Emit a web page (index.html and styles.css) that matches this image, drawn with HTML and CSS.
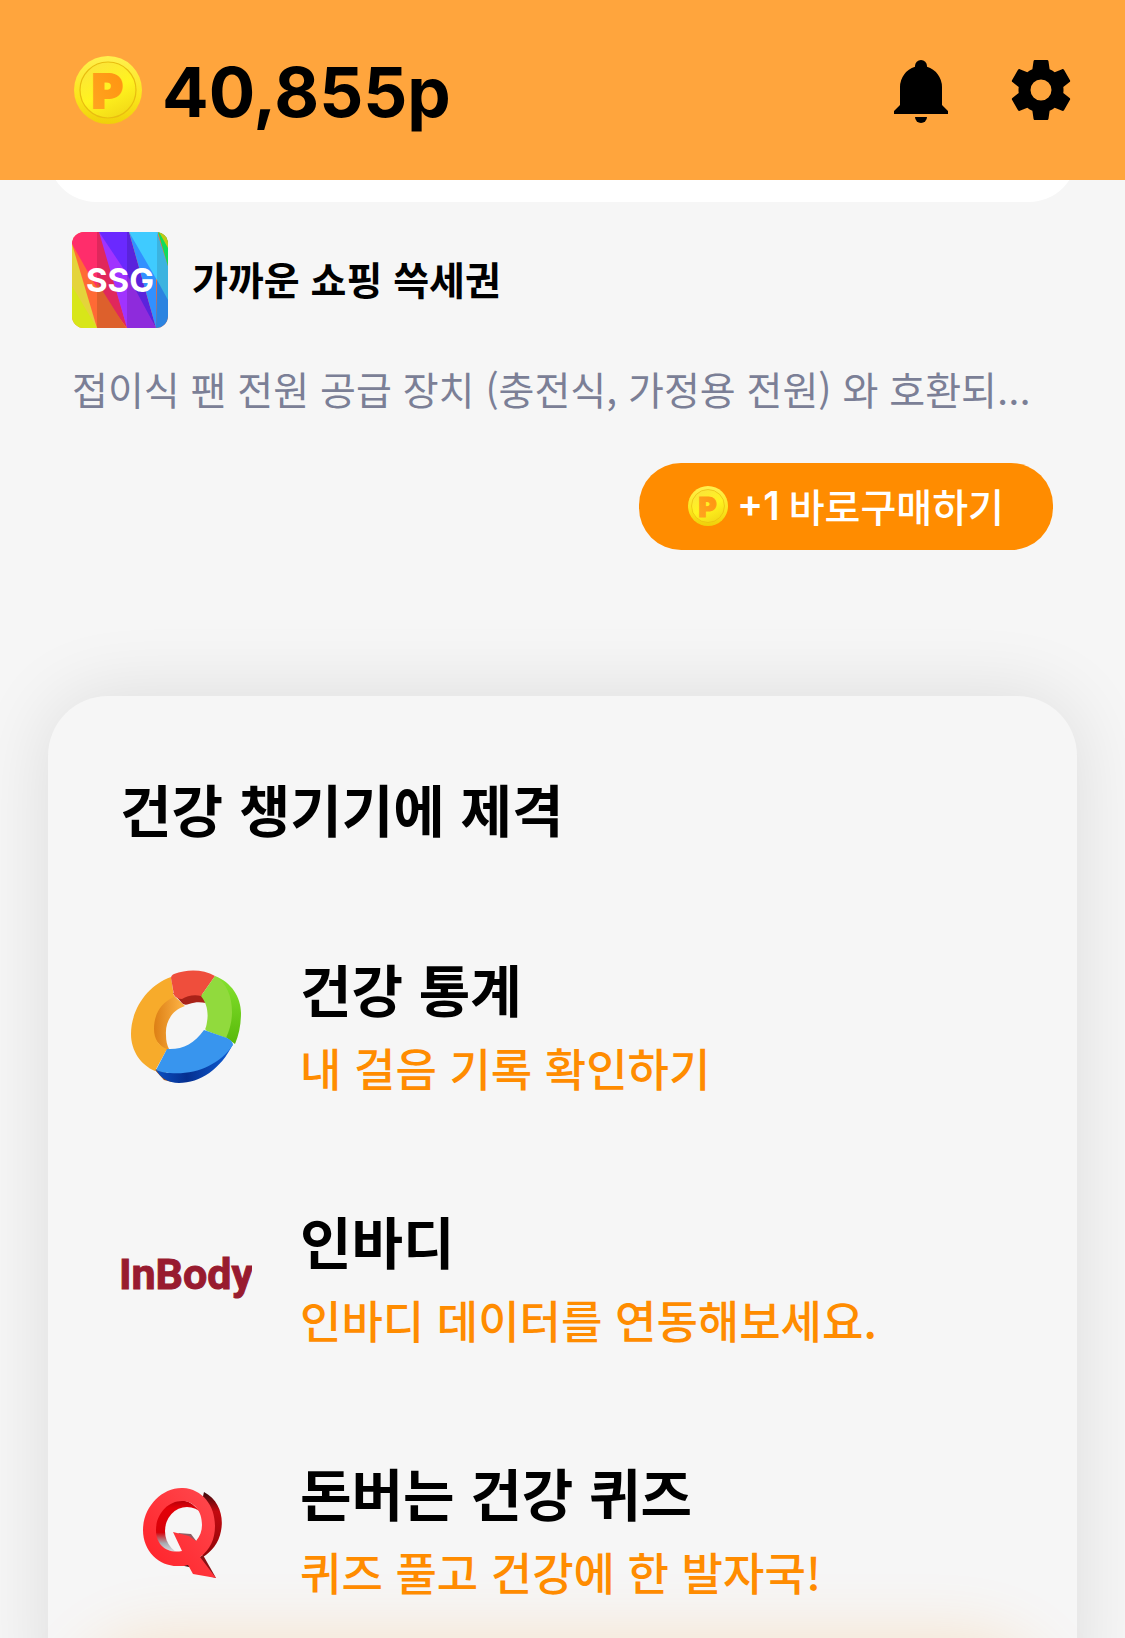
FILE: index.html
```html
<!DOCTYPE html>
<html lang="ko">
<head>
    <meta charset="UTF-8">
    <meta name="viewport" content="width=device-width, initial-scale=1.0">
    <title>건강 챙기기에 제격</title>
    <link rel="stylesheet" href="styles.css">
</head>
<body>

<!-- shared coin icon -->
<svg class="defs" width="0" height="0" aria-hidden="true">
    <defs>
        <linearGradient id="coin-edge" x1="0" y1="0" x2="0" y2="1">
            <stop offset="0" stop-color="#fff04e"/>
            <stop offset="0.6" stop-color="#fbe51c"/>
            <stop offset="1" stop-color="#efd00a"/>
        </linearGradient>
        <linearGradient id="coin-face" x1="0.2" y1="0" x2="0.7" y2="1">
            <stop offset="0" stop-color="#fbe33c"/>
            <stop offset="0.55" stop-color="#fff41f"/>
            <stop offset="1" stop-color="#f2d916"/>
        </linearGradient>
        <linearGradient id="coin-letter" x1="0" y1="1" x2="1" y2="0">
            <stop offset="0" stop-color="#ffa621"/>
            <stop offset="1" stop-color="#ff920f"/>
        </linearGradient>
        <symbol id="coin" viewBox="0 0 68 68">
            <circle cx="34" cy="34" r="34" fill="url(#coin-edge)"/>
            <circle cx="34" cy="34" r="28" fill="url(#coin-face)" stroke="#e9bd10" stroke-width="1.2"/>
            <text x="18" y="52" class="coin-letter" fill="url(#coin-letter)" stroke="url(#coin-letter)">P</text>
        </symbol>
    </defs>
</svg>

<header class="topbar">
    <div class="points">
        <svg class="points-coin"><use href="#coin"/></svg>
        <span>40,855p</span>
    </div>
    <div class="actions">
        <button type="button" class="icon-btn" aria-label="알림">
            <svg viewBox="0 0 72 72">
                <path d="M30 12a6 6 0 0 1 12 0v.8A21 21 0 0 1 57 33v18l6 6v3H9v-3l6-6V33a21 21 0 0 1 15-20.200z"/>
                <path d="M30 63h12a6 6 0 0 1-12 0z"/>
            </svg>
        </button>
        <button type="button" class="icon-btn" aria-label="설정">
            <svg viewBox="0 0 24 24">
                <path d="M19.430 12.980c.040-.320.070-.640.070-.980s-.030-.660-.070-.980l2.110-1.650c.190-.150.240-.420.120-.640l-2-3.460c-.120-.220-.390-.300-.610-.220l-2.490 1c-.520-.400-1.080-.730-1.690-.980l-.380-2.650A.488.488 0 0 0 14 2h-4c-.250 0-.460.180-.490.420l-.380 2.650c-.610.250-1.170.590-1.690.980l-2.490-1c-.230-.090-.490 0-.610.220l-2 3.460c-.130.220-.070.490.120.640l2.110 1.650c-.040.320-.070.650-.070.980s.030.660.070.980l-2.110 1.650c-.190.150-.240.420-.120.640l2 3.460c.120.220.390.300.610.220l2.490-1c.520.400 1.080.730 1.690.980l.380 2.650c.030.240.240.420.490.420h4c.250 0 .460-.180.490-.420l.380-2.650c.610-.250 1.170-.590 1.690-.980l2.490 1c.230.090.490 0 .610-.220l2-3.460c.120-.220.070-.490-.120-.640l-2.110-1.650zM12 15.500a3.500 3.500 0 1 1 0-7 3.500 3.500 0 0 1 0 7z"/>
            </svg>
        </button>
    </div>
</header>

<main>
    <div class="prev-card"></div>

    <section class="ad">
        <div class="ad-head">
            <svg class="ad-logo" viewBox="0 0 96 96" role="img" aria-label="SSG">
                <rect width="96" height="96" fill="#ff6a35"/>
                <path d="M0 0h28L25 0v56L0 12z" fill="#ff2d6b"/>
                <path d="M25 0h3l27 96L25 56z" fill="#e0275c"/>
                <path d="M0 12l25 84H0z" fill="#e4d43b"/>
                <path d="M0 54l25 42H0z" fill="#d8e619"/>
                <path d="M25 50l29 46H25z" fill="#dd602c"/>
                <path d="M27 0l28 96V34z" fill="#a033ff"/>
                <path d="M27 0h30l-2 42z" fill="#6a29ff"/>
                <path d="M55 0h2l27 96-29-48z" fill="#5a23dc"/>
                <path d="M55 42l29 54H55z" fill="#8e2bdc"/>
                <path d="M57 0l27 96V40z" fill="#3290ff"/>
                <path d="M57 0h29v50z" fill="#3fcbff"/>
                <path d="M85 0l11 34v36L85 50z" fill="#3bb3e0"/>
                <path d="M85 48l11 20v28H84z" fill="#2b83e0"/>
                <path d="M86 0h10v34z" fill="#0ddc5c"/>
                <path d="M87 0h9v16z" fill="#c3c814"/>
                <text x="48" y="60" class="ssg-text">SSG</text>
            </svg>
            <h3>가까운 쇼핑 쓱세권</h3>
        </div>
        <p class="ad-desc">접이식 팬 전원 공급 장치 (충전식, 가정용 전원) 와 호환되<span class="dots">…</span></p>
        <button type="button" class="buy-btn">
            <svg class="buy-coin"><use href="#coin"/></svg>
            <span class="plus">+1</span>
            <span class="buy-label">바로구매하기</span>
        </button>
    </section>

    <section class="card">
        <h2>건강 챙기기에 제격</h2>
        <ul class="menu">
            <li>
                <a href="#">
                    <svg class="menu-icon" viewBox="0 0 132 132" aria-hidden="true">
                        <defs>
                            <linearGradient id="d-yellow" x1="0" y1="0" x2="1" y2="0">
                                <stop offset="0" stop-color="#d97a10"/>
                                <stop offset="1" stop-color="#ffb648"/>
                            </linearGradient>
                            <linearGradient id="d-blue" x1="0" y1="0" x2="1" y2="0">
                                <stop offset="0" stop-color="#0b4fc0"/>
                                <stop offset="0.400" stop-color="#052f90"/>
                                <stop offset="1" stop-color="#0f5fd6"/>
                            </linearGradient>
                            <linearGradient id="d-green" x1="0" y1="0" x2="0" y2="1">
                                <stop offset="0" stop-color="#86e32f"/>
                                <stop offset="1" stop-color="#58b90a"/>
                            </linearGradient>
                        </defs>
                        <path d="M34 109l10 11 8 2-8-13z" fill="#a9500f"/>
                        <path d="M51 33l14 13C52 50 45 62 46 75c0 6 1 10 3 14l-4 2-14-16c0-18 6-30 20-42z" fill="url(#d-yellow)"/>
                        <path d="M51 17C28 25 11 49 11 74c0 17 10 31 24 37l12-22c-8-3-13-10-13-20 0-15 7-26 20-32z" fill="#f7ab2b"/>
                        <path d="M53 33l9 10c2 2 4 2 7 1 6-2 11-2 17-1l-5-10z" fill="#a92218"/>
                        <path d="M51 18c0-2 1-3 3-4 13-5 29-5 41 2L81 36c-7-2-14 0-19 3-4 0-7-2-8-4z" fill="#ef4e3c"/>
                        <path d="M95 16c16 6 26 21 26 37 0 11-2 22-6 31l-11-8 6-35z" fill="url(#d-green)"/>
                        <path d="M95 16c12 7 17 21 17 36 0 9-2 17-6 26l-19-7c-2-1-2-2-1-4 3-12 2-22-5-31z" fill="#91da3d"/>
                        <path d="M36 110l12 3 53-17 12-12c-12 25-33 39-54 39-11 0-18-5-23-13z" fill="url(#d-blue)"/>
                        <path d="M84 70l23 8c4 2 6 4 6 7-14 20-37 30-63 28-5 0-9-1-14-3l11-21c15 1 27-5 37-19z" fill="#3895ee"/>
                    </svg>
                    <div class="menu-text">
                        <strong>건강 통계</strong>
                        <span>내 걸음 기록 확인하기</span>
                    </div>
                </a>
            </li>
            <li>
                <a href="#">
                    <svg class="menu-icon" viewBox="0 0 132 132" role="img" aria-label="InBody">
                        <text x="66" y="77" class="inbody-text">InBody</text>
                    </svg>
                    <div class="menu-text">
                        <strong>인바디</strong>
                        <span>인바디 데이터를 연동해보세요.</span>
                    </div>
                </a>
            </li>
            <li>
                <a href="#">
                    <svg class="menu-icon" viewBox="0 0 132 132" aria-hidden="true">
                        <defs>
                            <linearGradient id="q-face" x1="0" y1="1" x2="1" y2="0">
                                <stop offset="0" stop-color="#ff1f27"/>
                                <stop offset="1" stop-color="#ff4a4f"/>
                            </linearGradient>
                            <linearGradient id="q-side" x1="0" y1="0" x2="0" y2="1">
                                <stop offset="0" stop-color="#3a0a0c"/>
                                <stop offset="0.300" stop-color="#c30a10"/>
                                <stop offset="1" stop-color="#8f0508"/>
                            </linearGradient>
                            <linearGradient id="q-inner" x1="0" y1="0" x2="0" y2="1">
                                <stop offset="0" stop-color="#b00008"/>
                                <stop offset="0.150" stop-color="#e30008"/>
                                <stop offset="0.600" stop-color="#d80008"/>
                                <stop offset="0.800" stop-color="#a9a9b0"/>
                                <stop offset="1" stop-color="#e8e8ec"/>
                            </linearGradient>
                        </defs>
                        <path d="M84 28c15 8 20 24 17 39-2 12-10 21-18 26l-7-30z" fill="url(#q-side)"/>
                        <path d="M55 100l14 3 3-5z" fill="#3c1012"/>
                        <path d="M78 94l5-3 13 23-7-2z" fill="#8a1014"/>
                        <ellipse cx="59" cy="63" rx="25" ry="27" fill="url(#q-inner)"/>
                        <ellipse cx="67" cy="67" rx="22" ry="24" class="q-hole"/>
                        <path d="M58 69l13 1 6 8-6 4z" fill="#8e5b62"/>
                        <path fill-rule="evenodd" d="M63 24C42 23 23 43 23 66c0 22 17 37 36 36 4 0 6 0 9-1l5 9 23 4-16-21c10-7 15-18 15-31 0-21-13-37-32-38zM62 37c12 0 20 10 20 24 0 6-2 11-6 16l-7-5-16-4 9 19c-15 3-26-6-26-21 0-16 12-29 26-29z" fill="url(#q-face)"/>
                    </svg>
                    <div class="menu-text">
                        <strong>돈버는 건강 퀴즈</strong>
                        <span>퀴즈 풀고 건강에 한 발자국!</span>
                    </div>
                </a>
            </li>
        </ul>
    </section>
</main>

<!-- glow of the bottom banner -->
<div class="bottom-banner"></div>

</body>
</html>
```
FILE: styles.css
```css
* {
    margin: 0;
    padding: 0;
    box-sizing: border-box;
}

body {
    height: 100vh;
    background: #f6f6f6;
    color: #000;
    font-family: "Noto Sans CJK KR", sans-serif;
    overflow: hidden;
}

button {
    border: none;
    background: none;
    font-family: inherit;
    cursor: pointer;
}

.defs {
    position: absolute;
}

.coin-letter {
    font-family: Inter, sans-serif;
    font-weight: 900;
    font-size: 47px;
    stroke-width: 2px;
}

/* top bar */
.topbar {
    display: flex;
    justify-content: space-between;
    align-items: center;
    height: 180px;
    padding: 0 48px 0 74px;
    background: #ffa53d;
}

.points {
    display: flex;
    align-items: center;
    gap: 20px;
    font-family: Inter, sans-serif;
    font-weight: 700;
    font-size: 69px;
}

.points span {
    padding-top: 3px;
}

.points-coin {
    width: 68px;
    height: 68px;
}

.actions {
    display: flex;
    gap: 48px;
}

.icon-btn {
    width: 72px;
    height: 72px;
}

.icon-btn svg {
    display: block;
    width: 100%;
    height: 100%;
    fill: #000;
    overflow: visible;
}

/* end of the card scrolled under the bar */
.prev-card {
    height: 22px;
    margin: 0 48px;
    overflow: hidden;
    display: flex;
    align-items: flex-end;
}

.prev-card::after {
    content: "";
    flex: 1;
    height: 96px;
    background: #fff;
    border-radius: 48px;
}

/* shopping ad */
.ad {
    display: flex;
    flex-direction: column;
    padding: 30px 72px 0;
}

.ad-head {
    display: flex;
    align-items: center;
    gap: 24px;
}

.ad-logo {
    width: 96px;
    height: 96px;
    border-radius: 12px;
}

.ssg-text {
    font-family: Inter, sans-serif;
    font-weight: 700;
    font-size: 33px;
    fill: #fff;
    text-anchor: middle;
}

.ad-head h3 {
    padding-bottom: 4px;
    font-size: 39px;
    font-weight: 700;
}

.ad-desc {
    margin-top: 32px;
    font-size: 39px;
    line-height: 57px;
    color: #7b7f96;
    white-space: nowrap;
}

.dots {
    font-family: Inter, sans-serif;
    line-height: 1;
}

.buy-btn {
    align-self: flex-end;
    display: flex;
    align-items: center;
    height: 87px;
    margin-top: 46px;
    padding: 0 49px 2px;
    border-radius: 42px;
    background: #ff8c00;
    color: #fff;
    font-size: 39px;
    font-weight: 500;
}

.buy-coin {
    width: 40px;
    height: 40px;
    margin-right: 9px;
}

.plus {
    margin-right: 9px;
    font-family: Inter, sans-serif;
    font-weight: 600;
}

.buy-label {
    padding-bottom: 2px;
}

/* health card */
.card {
    margin: 146px 48px 0;
    padding: 72px 72px;
    border-radius: 60px;
    background: #f6f6f6;
    box-shadow: 0 0 78px rgba(0, 0, 0, 0.11);
}

.card h2 {
    font-size: 56px;
    font-weight: 700;
    line-height: 80px;
}

.menu {
    margin-top: 52px;
    list-style: none;
}

.menu a {
    display: flex;
    align-items: center;
    gap: 48px;
    height: 252px;
    color: inherit;
    text-decoration: none;
}

.menu-icon {
    flex-shrink: 0;
    width: 132px;
    height: 132px;
}

.inbody-text {
    font-family: Roboto, sans-serif;
    font-weight: 700;
    font-size: 43px;
    fill: #981b2f;
    stroke: #981b2f;
    stroke-width: 1px;
    text-anchor: middle;
}

.q-hole {
    fill: #f6f6f6;
}

.menu-text {
    display: flex;
    flex-direction: column;
    gap: 4px;
}

.menu-text strong {
    font-size: 56px;
    font-weight: 700;
    line-height: 80px;
}

.menu-text span {
    font-size: 45px;
    font-weight: 500;
    line-height: 72px;
    color: #ff8c00;
}

.bottom-banner {
    position: fixed;
    top: 100%;
    left: 72px;
    right: 72px;
    height: 180px;
    border-radius: 90px;
    box-shadow: 0 0 66px rgba(255, 140, 0, 0.18);
}
```
